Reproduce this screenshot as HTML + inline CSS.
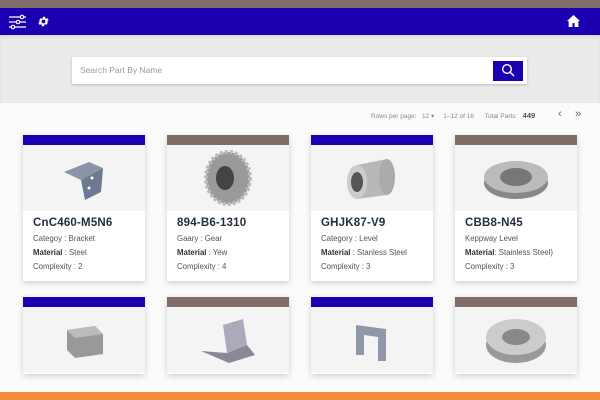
<!DOCTYPE html>
<html><head><style>
*{margin:0;padding:0;box-sizing:border-box}
body{width:600px;height:400px;overflow:hidden;background:#fbfbfb;font-family:"Liberation Sans",sans-serif;position:relative}
.abs{position:absolute}
.card{position:absolute;width:122px;background:#fff;box-shadow:0 2px 6px rgba(0,0,0,.18)}
.bar{height:10px}
.img{height:66px;background:#f4f4f5;display:flex;align-items:center;justify-content:center}
.t{font-weight:bold;font-size:11.5px;color:#1f2d3d;margin:6px 0 0 10px;letter-spacing:.2px}
.l{font-size:7.8px;color:#555;margin:5px 0 0 10px}
.l b{color:#333}
.blue{background:#1a00b0}.brown{background:#7f6d68}
</style></head><body>
<div class="abs" style="left:0;top:0;width:600px;height:8px;background:#7f6e6a"></div>
<div class="abs" style="left:0;top:8px;width:600px;height:27px;background:#1a00b0"></div>
<svg class="abs" style="left:9px;top:14px" width="18" height="16" viewBox="0 0 18 16" stroke="#fff" stroke-width="1.2" fill="none"><line x1="0" y1="3" x2="17" y2="3"/><line x1="0" y1="8" x2="17" y2="8"/><line x1="0" y1="13" x2="17" y2="13"/><circle cx="13" cy="3" r="1.7" fill="#1a00b0"/><circle cx="9" cy="8" r="1.7" fill="#1a00b0"/><circle cx="4" cy="13" r="1.7" fill="#1a00b0"/></svg>
<svg class="abs" style="left:37px;top:15px" width="13" height="13" viewBox="0 0 24 24"><path fill="#fff" d="M19.4 13c.04-.3.06-.6.06-1s-.02-.7-.06-1l2.1-1.650-2-3.460-2.5 1a7 7 0 0 0-1.7-1l-.4-2.650h-4l-.4 2.650a7 7 0 0 0-1.7 1l-2.5-1-2 3.460L4.6 11c-.04.3-.06.6-.06 1s.02.7.06 1l-2.1 1.650 2 3.460 2.5-1c.5.4 1.1.75 1.7 1l.4 2.650h4l.4-2.650a7 7 0 0 0 1.7-1l2.5 1 2-3.460zM12 15.5a3.5 3.5 0 1 1 0-7 3.5 3.5 0 0 1 0 7z"/></svg>
<svg class="abs" style="left:567px;top:15px" width="13" height="12" viewBox="0 0 24 22"><path fill="#fff" d="M12 0 0 11h3v11h7v-7h4v7h7V11h3z"/></svg>
<div class="abs" style="left:0;top:35px;width:600px;height:68px;background:#ebebeb;box-shadow:inset 0 2px 3px rgba(0,0,0,.08)"></div>
<div class="abs" style="left:72px;top:57px;width:455px;height:27px;background:#fff;box-shadow:0 1px 3px rgba(0,0,0,.2)"></div>
<div class="abs" style="left:80px;top:65px;font-size:8.5px;color:#999">Search Part By Name</div>
<div class="abs" style="left:493px;top:61px;width:30px;height:20px;background:#1a00b0"></div>
<svg class="abs" style="left:501px;top:63px" width="14" height="14" viewBox="0 0 14 14" stroke="#fff" stroke-width="1.4" fill="none"><circle cx="6" cy="6" r="4.3"/><line x1="9.2" y1="9.2" x2="13" y2="13"/></svg>
<div class="abs" style="top:111px;left:371px;font-size:6.5px;color:#888;white-space:nowrap">Rows per page:&nbsp;&nbsp; 12 ▾ &nbsp;&nbsp;&nbsp; 1–12 of 16 &nbsp;&nbsp;&nbsp;&nbsp; Total Parts: &nbsp;&nbsp;<b style="color:#555;font-size:7.5px">449</b></div>
<div class="abs" style="top:108px;left:558px;font-size:11px;color:#666">‹</div>
<div class="abs" style="top:108px;left:575px;font-size:11px;color:#666">»</div>

<div class="card" style="left:23px;top:135px;height:146px"><div class="bar blue"></div><div class="img"><svg width="50" height="48"><path d="M5 18 30 8 44 14 22 26z" fill="#8a93a8"/><path d="M22 26 44 14 42 38 26 46z" fill="#6e7890"/><circle cx="33" cy="24" r="1.5" fill="#fff"/><circle cx="30" cy="34" r="1.5" fill="#fff"/></svg></div><div class="t">CnC460-M5N6</div><div class="l">Categoy : Bracket</div><div class="l"><b>Material</b> : Steel</div><div class="l">Complexity : 2</div></div>
<div class="card" style="left:167px;top:135px;height:146px"><div class="bar brown"></div><div class="img"><svg width="54" height="58"><ellipse cx="27" cy="29" rx="22" ry="26" fill="#999" stroke="#bbb" stroke-width="4" stroke-dasharray="3 2"/><ellipse cx="24" cy="29" rx="9" ry="12" fill="#444"/></svg></div><div class="t">894-B6-1310</div><div class="l">Gaary : Gear</div><div class="l"><b>Material</b> : Yew</div><div class="l">Complexity : 4</div></div>
<div class="card" style="left:311px;top:135px;height:146px"><div class="bar blue"></div><div class="img"><svg width="60" height="50"><path d="M15 12 45 6 45 42 15 46z" fill="#b8b8b8"/><ellipse cx="45" cy="24" rx="8" ry="18" fill="#aaa"/><ellipse cx="15" cy="29" rx="10" ry="17" fill="#ccc"/><ellipse cx="15" cy="29" rx="6" ry="10" fill="#555"/></svg></div><div class="t">GHJK87-V9</div><div class="l">Category : Level</div><div class="l"><b>Material</b> : Stanless Steel</div><div class="l">Complexity : 3</div></div>
<div class="card" style="left:455px;top:135px;height:146px"><div class="bar brown"></div><div class="img"><svg width="70" height="50"><ellipse cx="35" cy="30" rx="32" ry="16" fill="#888"/><ellipse cx="35" cy="24" rx="32" ry="16" fill="#bbb"/><ellipse cx="35" cy="24" rx="16" ry="9" fill="#777"/></svg></div><div class="t">CBB8-N45</div><div class="l">Keppway Level</div><div class="l"><b>Material</b>: Stainless Steel)</div><div class="l">Complexity : 3</div></div>

<div class="card" style="left:23px;top:297px;height:77px"><div class="bar blue"></div><div class="img"><svg width="50" height="40"><path d="M8 10 36 6 44 14 44 34 16 38 8 30z" fill="#999"/><path d="M8 10 36 6 44 14 16 18z" fill="#bbb"/></svg></div></div>
<div class="card" style="left:167px;top:297px;height:77px"><div class="bar brown"></div><div class="img"><svg width="70" height="50"><path d="M30 10 50 4 54 30 34 38z" fill="#aab"/><path d="M8 36 34 38 54 30 62 40 36 48z" fill="#889"/></svg></div></div>
<div class="card" style="left:311px;top:297px;height:77px"><div class="bar blue"></div><div class="img"><svg width="60" height="50"><path d="M14 10 44 14 44 46 36 46 36 22 22 20 22 40 14 40z" fill="#8f97a8"/></svg></div></div>
<div class="card" style="left:455px;top:297px;height:77px"><div class="bar brown"></div><div class="img"><svg width="70" height="54"><ellipse cx="35" cy="32" rx="30" ry="18" fill="#999"/><ellipse cx="35" cy="24" rx="30" ry="18" fill="#ccc"/><ellipse cx="35" cy="24" rx="14" ry="8" fill="#888"/></svg></div></div>

<div class="abs" style="left:0;top:392px;width:600px;height:8px;background:#f68d3e"></div>
</body></html>
